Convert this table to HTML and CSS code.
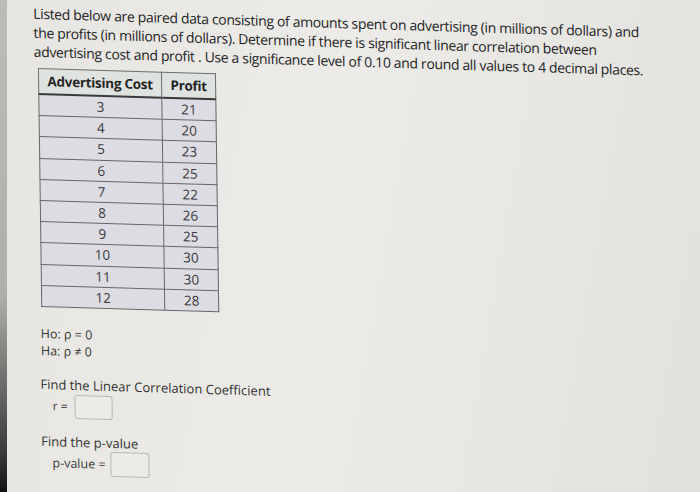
FILE: index.html
```html
<!DOCTYPE html>
<html>
<head>
<meta charset="utf-8">
<link rel="stylesheet" href="styles.css">
</head>
<body>
<div class="screen">
  <div class="edge"></div>
  <main class="content">
    <p class="intro">Listed below are paired data consisting of amounts spent on advertising (in millions of dollars) and the profits (in millions of dollars). Determine if there is significant linear correlation between advertising cost and profit . Use a significance level of 0.10 and round all values to 4 decimal places.</p>
    <table class="data">
      <thead>
        <tr><th class="c1">Advertising Cost</th><th class="c2">Profit</th></tr>
      </thead>
      <tbody>
        <tr><td>3</td><td>21</td></tr>
        <tr><td>4</td><td>20</td></tr>
        <tr><td>5</td><td>23</td></tr>
        <tr><td>6</td><td>25</td></tr>
        <tr><td>7</td><td>22</td></tr>
        <tr><td>8</td><td>26</td></tr>
        <tr><td>9</td><td>25</td></tr>
        <tr><td>10</td><td>30</td></tr>
        <tr><td>11</td><td>30</td></tr>
        <tr><td>12</td><td>28</td></tr>
      </tbody>
    </table>
    <div class="hyp">
      <div>Ho: ρ = 0</div>
      <div>Ha: ρ ≠ 0</div>
    </div>
    <div class="q q1">Find the Linear Correlation Coefficient</div>
    <div class="ans ans1"><span>r =</span><span class="box"></span></div>
    <div class="q q2">Find the p-value</div>
    <div class="ans ans2"><span>p-value =</span><span class="box"></span></div>
  </main>
</div>
</body>
</html>
```
FILE: styles.css
```css
html, body {
  margin: 0;
  padding: 0;
  width: 700px;
  height: 492px;
  overflow: hidden;
}
body {
  font-family: "Open Sans", "Noto Sans", sans-serif;
  color: #2e2e30;
  background: #e8e7e3;
}
.screen {
  display: flex;
  width: 700px;
  height: 492px;
  overflow: hidden;
  background: linear-gradient(100deg, #e6e5e1 0%, #ecebe7 45%, #e8e7e3 70%, #e2e1dc 100%);
}
.edge {
  width: 7px;
  flex: none;
  background: linear-gradient(180deg, #bebcb8 0%, #b0aeaa 60%, #3a3a3a 92%, #111 100%);
}
.content {
  flex: 1;
  padding: 3px 0 0 26px;
  transform: skew(0.8deg, 1.75deg);
  transform-origin: 0 0;
}
.intro {
  margin: 0;
  width: 625px;
  font-size: 14px;
  line-height: 19px;
  letter-spacing: -0.35px;
  color: #242426;
}
.data {
  margin: 7px 0 0 4px;
  border-collapse: collapse;
  font-size: 13.5px;
  color: #3a3a3e;
}
.data th {
  height: 24px;
  padding: 0;
  background: #dfe3df;
  font-weight: 700;
  letter-spacing: -0.3px;
  color: #262626;
  border: 1px solid #6d6d6d;
  border-bottom: 2px solid #3a3a3a;
}
.data th.c1 { width: 122px; }
.data th.c2 { width: 53px; }
.data td {
  height: 20.2px;
  padding: 0;
  text-align: center;
  background: #dcdce2;
  border: 1px solid #66666a;
  line-height: 20px;
}
.hyp {
  margin: 18px 0 0 3px;
  font-size: 12.5px;
  line-height: 17px;
  color: #333;
}
.q {
  font-size: 13px;
  color: #333;
}
.q1 {
  margin: 16px 0 0 2px;
}
.ans {
  display: flex;
  align-items: center;
  gap: 7px;
  font-size: 12px;
  color: #3a3a3a;
}
.ans1 {
  margin: 0 0 0 14px;
  height: 26px;
}
.ans2 {
  margin: -2px 0 0 13px;
  height: 26px;
  gap: 5px;
  font-size: 12.5px;
}
.box {
  display: inline-block;
  width: 36px;
  height: 22px;
  border: 1px solid #b9b9b9;
  border-radius: 3px;
  background: #ecebe7;
}
.ans2 .box { width: 37px; height: 23px; }
.q2 {
  margin: 13px 0 0 2px;
  height: 20px;
}
```
